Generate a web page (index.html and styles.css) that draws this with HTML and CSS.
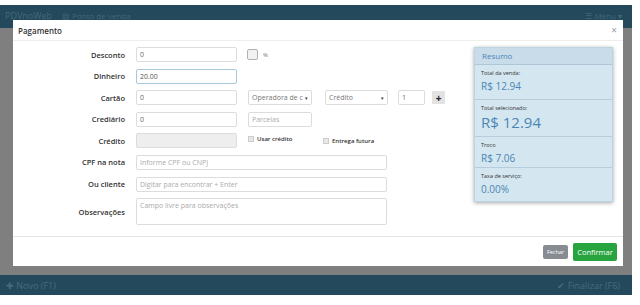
FILE: index.html
```html
<html>
<head>
    <link rel="stylesheet" href="styles.css">
</head>
<body>
    <div class="app">
        <div class="topbar">
            <span class="brand">PDVnoWeb</span>
            <span class="nav-item">&#9636; Ponto de venda</span>
            <span class="nav-right">&#9776; Menu &#9662;</span>
        </div>
        <div class="stage"></div>
        <div class="bottombar">
            <span>&#10010; Novo (F1)</span>
            <span>&#10004; Finalizar (F6)</span>
        </div>

        <div class="modal">
            <div class="modal-header">
                <span>Pagamento</span>
                <span class="close">&times;</span>
            </div>
            <div class="modal-body">
                <div class="form">
                    <div class="row">
                        <label>Desconto</label>
                        <input class="w-sm" value="0">
                        <span class="check"></span><span class="pct">%</span>
                    </div>
                    <div class="row">
                        <label>Dinheiro</label>
                        <input class="w-sm focus" value="20.00">
                    </div>
                    <div class="row">
                        <label>Cartão</label>
                        <input class="w-sm" value="0">
                        <div class="select s1">Operadora de c<span class="caret">&#9662;</span></div>
                        <div class="select s2">Crédito<span class="caret">&#9662;</span></div>
                        <input class="w-xs" value="1">
                        <span class="plus">+</span>
                    </div>
                    <div class="row">
                        <label>Crediário</label>
                        <input class="w-sm" value="0">
                        <input class="w-md" placeholder="Parcelas">
                    </div>
                    <div class="row">
                        <label>Crédito</label>
                        <input class="w-sm disabled" disabled>
                        <span class="opt opt1"><span class="mini"></span>Usar crédito</span>
                        <span class="opt"><span class="mini"></span>Entrega futura</span>
                    </div>
                    <div class="row">
                        <label>CPF na nota</label>
                        <input class="w-lg" placeholder="Informe CPF ou CNPJ">
                    </div>
                    <div class="row">
                        <label>Ou cliente</label>
                        <input class="w-lg" placeholder="Digitar para encontrar + Enter">
                    </div>
                    <div class="row tall">
                        <label>Observações</label>
                        <textarea class="w-lg" placeholder="Campo livre para observações"></textarea>
                    </div>
                </div>
                <div class="resumo">
                    <div class="resumo-title">Resumo</div>
                    <div class="item">
                        <div class="cap">Total da venda:</div>
                        <div class="val">R$ 12.94</div>
                    </div>
                    <div class="item">
                        <div class="cap">Total selecionado:</div>
                        <div class="val big">R$ 12.94</div>
                    </div>
                    <div class="item">
                        <div class="cap">Troco</div>
                        <div class="val">R$ 7.06</div>
                    </div>
                    <div class="item last">
                        <div class="cap">Taxa de serviço:</div>
                        <div class="val">0.00%</div>
                    </div>
                </div>
            </div>
            <div class="modal-footer">
                <span class="btn btn-close">Fechar</span>
                <span class="btn btn-ok">Confirmar</span>
            </div>
        </div>
    </div>
</body>
</html>
```

FILE: styles.css
```css
body {
    margin: 0;
    background-color: #ffffff;
    font-family: 'Open Sans', sans-serif;
}
.app {
    width: 632px;
    margin-top: 5px;
    height: 290px;
    display: flex;
    flex-direction: column;
    position: relative;
    background-color: #7f7f7f;
}
.topbar {
    height: 23px;
    background-color: #24495c;
    color: #426879;
    display: flex;
    align-items: flex-start;
    padding: 4px 10px 0 5px;
    box-sizing: border-box;
    font-size: 9px;
}
.brand {
    margin-right: 10px;
}
.nav-item {
    font-size: 8px;
    margin-top: 1px;
}
.nav-right {
    margin-left: auto;
    font-size: 8px;
    margin-top: 1px;
}
.stage {
    flex: 1;
}
.bottombar {
    height: 20px;
    background-color: #24495c;
    color: #466c7e;
    display: flex;
    justify-content: space-between;
    align-items: center;
    padding: 0 12px 0 6px;
    font-size: 9px;
}
.modal {
    position: absolute;
    left: 13px;
    top: 15px;
    width: 610px;
    height: 246px;
    background-color: #ffffff;
    display: flex;
    flex-direction: column;
    color: #333;
}
.modal-header {
    height: 21px;
    border-bottom: 1px solid #eeeeee;
    display: flex;
    align-items: center;
    justify-content: space-between;
    padding: 0 6px 0 5px;
    font-size: 8px;
    font-weight: 600;
    box-sizing: border-box;
}
.close {
    color: #999;
    font-size: 10px;
    font-weight: 400;
}
.modal-body {
    flex: 1;
    display: flex;
    justify-content: space-between;
    padding: 6px 10px 0 0;
}
.form {
    display: flex;
    flex-direction: column;
    gap: 6.6px;
}
.row {
    display: flex;
    align-items: center;
    height: 15px;
}
.row.tall {
    height: 27px;
}
.row label {
    width: 112px;
    margin-right: 11px;
    text-align: right;
    font-size: 7.5px;
    font-weight: 600;
    color: #333;
}
input, textarea, .select {
    height: 15px;
    box-sizing: border-box;
    border: 1px solid #dcdcdc;
    border-radius: 2px;
    font-family: 'Open Sans', sans-serif;
    font-size: 7px;
    color: #6a6a6a;
    padding: 0 3px;
    margin: 0;
    background-color: #fff;
    outline: none;
}
input::placeholder, textarea::placeholder {
    color: #ababab;
}
.focus {
    border-color: #a6c8de;
    color: #555;
}
.disabled {
    background-color: #eeeeee;
}
textarea {
    height: 27px;
    resize: none;
    padding-top: 2px;
}
.w-sm { width: 101px; }
.w-md { width: 64px; margin-left: 11px; }
.w-lg { width: 251px; }
.w-xs { width: 27px; margin-left: 10px; }
.select {
    display: flex;
    align-items: center;
    justify-content: space-between;
    color: #777;
}
.s1 { width: 64px; margin-left: 11px; }
.s2 { width: 63px; margin-left: 13px; }
.caret {
    font-size: 5px;
    color: #333;
}
.check {
    width: 9px;
    height: 9px;
    border: 1px solid #b0b0b0;
    border-radius: 2px;
    background-color: #f2f2f2;
    margin-left: 10px;
}
.pct {
    font-size: 6px;
    color: #777;
    margin-left: 5px;
}
.plus {
    width: 13px;
    height: 13px;
    margin-left: 7px;
    background-color: #e3e3e3;
    font-size: 10px;
    font-weight: 700;
    display: flex;
    align-items: center;
    justify-content: center;
    color: #222;
}
.opt {
    display: flex;
    align-items: center;
    font-size: 6px;
    font-weight: 600;
    color: #333;
}
.opt1 {
    margin-left: 11px;
    width: 75px;
    margin-top: -3px;
}
.mini {
    width: 4px;
    height: 4px;
    border: 1px solid #ccc;
    background-color: #e8e8e8;
    margin-right: 3px;
}
.resumo {
    width: 139px;
    height: 155px;
    background-color: #d4e6f0;
    box-shadow: 0 1px 4px rgba(0, 0, 0, 0.35);
    border: 1px solid #bcd3e0;
    box-sizing: border-box;
    color: #4a86b4;
}
.resumo-title {
    height: 17px;
    background-color: #c9dcea;
    border-bottom: 1px solid #afc6d6;
    font-size: 8px;
    padding: 2px 7px 0;
    box-sizing: border-box;
}
.item {
    border-bottom: 1px solid #b8cddb;
    padding: 4px 6px 0;
    height: 35px;
    box-sizing: border-box;
}
.item:nth-child(3) {
    height: 37px;
}
.item:nth-child(4) {
    height: 31px;
}
.item.last {
    border-bottom: none;
}
.cap {
    font-size: 5.5px;
    color: #333;
}
.val {
    font-size: 10px;
    margin-top: 2px;
}
.val.big {
    font-size: 15px;
    margin-top: 0;
}
.modal-footer {
    height: 29px;
    border-top: 1px solid #e5e5e5;
    display: flex;
    justify-content: flex-end;
    align-items: center;
    gap: 5px;
    padding-right: 6px;
}
.btn {
    color: #ffffff;
    border-radius: 2px;
    display: flex;
    align-items: center;
    justify-content: center;
    font-weight: 400;
}
.btn-close {
    width: 25px;
    height: 14px;
    background-color: #868c92;
    font-size: 5.5px;
}
.btn-ok {
    width: 44px;
    height: 18px;
    background-color: #28a43f;
    font-size: 7.5px;
}
```
